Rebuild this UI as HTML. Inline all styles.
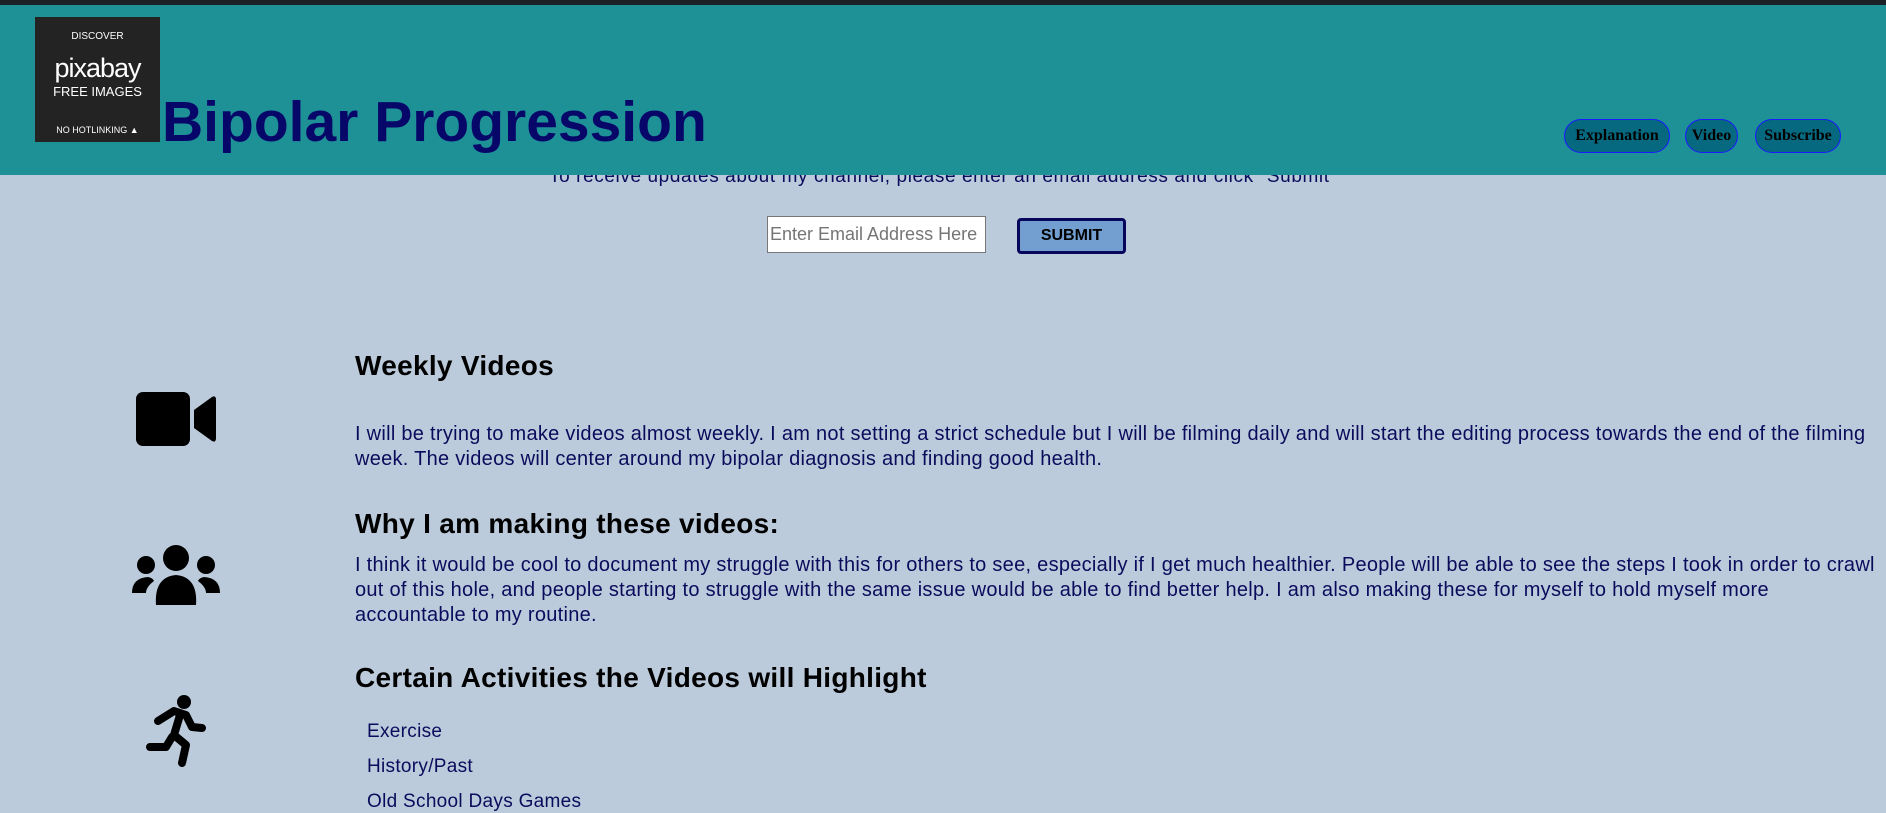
<!DOCTYPE html>
<html><head><meta charset="utf-8"><style>
*{margin:0;padding:0;box-sizing:border-box}
body{width:1886px;height:798px;overflow:hidden;background:#bccbdb;font-family:"Liberation Sans",sans-serif;color:#0b0b5c;position:relative}
.top{position:absolute;left:0;top:0;width:1886px;height:5px;background:#1c2128}
.hdr{position:absolute;left:0;top:5px;width:1886px;height:170px;background:#1e9197;z-index:2}
.logo{position:absolute;left:35px;top:12px;width:125px;height:125px;background:#232323;color:#fff;text-align:center}
.logo .d{position:absolute;top:14px;width:100%;font-size:10px}
.logo .p{position:absolute;top:36px;width:100%;font-size:27px;letter-spacing:-1px}
.logo .f{position:absolute;top:67px;width:100%;font-size:13px}
.logo .n{position:absolute;top:108px;width:100%;font-size:9px}
h1{position:absolute;left:162px;top:84px;font-size:57px;color:#07076a;font-weight:bold}
.nav{position:absolute;top:114px;height:34px;border:1px solid #1a1aff;border-radius:17px;background:#06697f;color:#000;font-family:"Liberation Serif",serif;font-weight:bold;font-size:16px;line-height:32px;text-align:center}
.msg{position:absolute;top:166px;left:0;width:1886px;text-align:center;font-size:19px;letter-spacing:0.6px}
input{position:absolute;left:767px;top:216px;width:219px;height:37px;border:1px solid #777;background:#fff;font-size:18px;font-family:"Liberation Sans",sans-serif;padding-left:2px;color:#666}
.sub{position:absolute;left:1017px;top:218px;width:109px;height:36px;background:#729fcf;border:3px solid #06065c;border-radius:4px;font-weight:bold;font-size:16px;color:#000;text-align:center;line-height:30px}
h2{position:absolute;left:355px;font-size:28px;color:#000;font-weight:bold;letter-spacing:0.3px}
p{position:absolute;left:355px;width:1528px;font-size:20px;line-height:25px;letter-spacing:0.28px}
.li{position:absolute;left:367px;font-size:19px;letter-spacing:0.3px}
svg{position:absolute}
</style></head><body>
<div class="top"></div>
<div class="hdr">
<div class="logo"><div class="d">DISCOVER</div><div class="p">pixabay</div><div class="f">FREE IMAGES</div><div class="n">NO HOTLINKING ▲</div></div>
<h1>Bipolar Progression</h1>
<div class="nav" style="left:1564px;width:106px">Explanation</div>
<div class="nav" style="left:1685px;width:53px">Video</div>
<div class="nav" style="left:1755px;width:86px">Subscribe</div>
</div>
<div class="msg">To receive updates about my channel, please enter an email address and click "Submit"</div>
<input placeholder="Enter Email Address Here">
<div class="sub">SUBMIT</div>
<h2 style="top:350px">Weekly Videos</h2>
<p style="top:422px">I will be trying to make videos almost weekly. I am not setting a strict schedule but I will be filming daily and will start the editing process towards the end of the filming week. The videos will center around my bipolar diagnosis and finding good health.</p>
<h2 style="top:508px">Why I am making these videos:</h2>
<p style="top:553px">I think it would be cool to document my struggle with this for others to see, especially if I get much healthier. People will be able to see the steps I took in order to crawl out of this hole, and people starting to struggle with the same issue would be able to find better help. I am also making these for myself to hold myself more accountable to my routine.</p>
<h2 style="top:662px">Certain Activities the Videos will Highlight</h2>
<div class="li" style="top:721px">Exercise</div>
<div class="li" style="top:756px">History/Past</div>
<div class="li" style="top:791px">Old School Days Games</div>
<svg style="left:136px;top:392px" width="80" height="54" viewBox="0 0 80 54"><rect x="0" y="0" width="54" height="54" rx="7" fill="#000"/><path d="M58 18 L76 5 Q80 3 80 8 L80 46 Q80 51 76 49 L58 36 Z" fill="#000"/></svg>
<svg style="left:132px;top:545px" width="88" height="60" viewBox="0 0 88 60"><circle cx="44" cy="13" r="13" fill="#000"/><circle cx="14" cy="20" r="9" fill="#000"/><circle cx="74" cy="20" r="9" fill="#000"/><path d="M24 60 Q22 32 44 30 Q66 32 64 60 Z" fill="#000"/><path d="M0 48 Q0 33 16 32 Q21 33 22 36 Q14 42 14 48 Z" fill="#000"/><path d="M88 48 Q88 33 72 32 Q67 33 66 36 Q74 42 74 48 Z" fill="#000"/></svg>
<svg style="left:146px;top:695px" width="60" height="72" viewBox="0 0 60 72"><circle cx="38" cy="7" r="7" fill="#000"/><path d="M12 26 L28 16 L40 20 L46 32 L56 33" stroke="#000" stroke-width="8" fill="none" stroke-linecap="round" stroke-linejoin="round"/><path d="M34 20 L28 40 L40 50 L36 68" stroke="#000" stroke-width="8" fill="none" stroke-linecap="round" stroke-linejoin="round"/><path d="M26 42 L20 52 L4 52" stroke="#000" stroke-width="8" fill="none" stroke-linecap="round" stroke-linejoin="round"/></svg>
</body></html>
